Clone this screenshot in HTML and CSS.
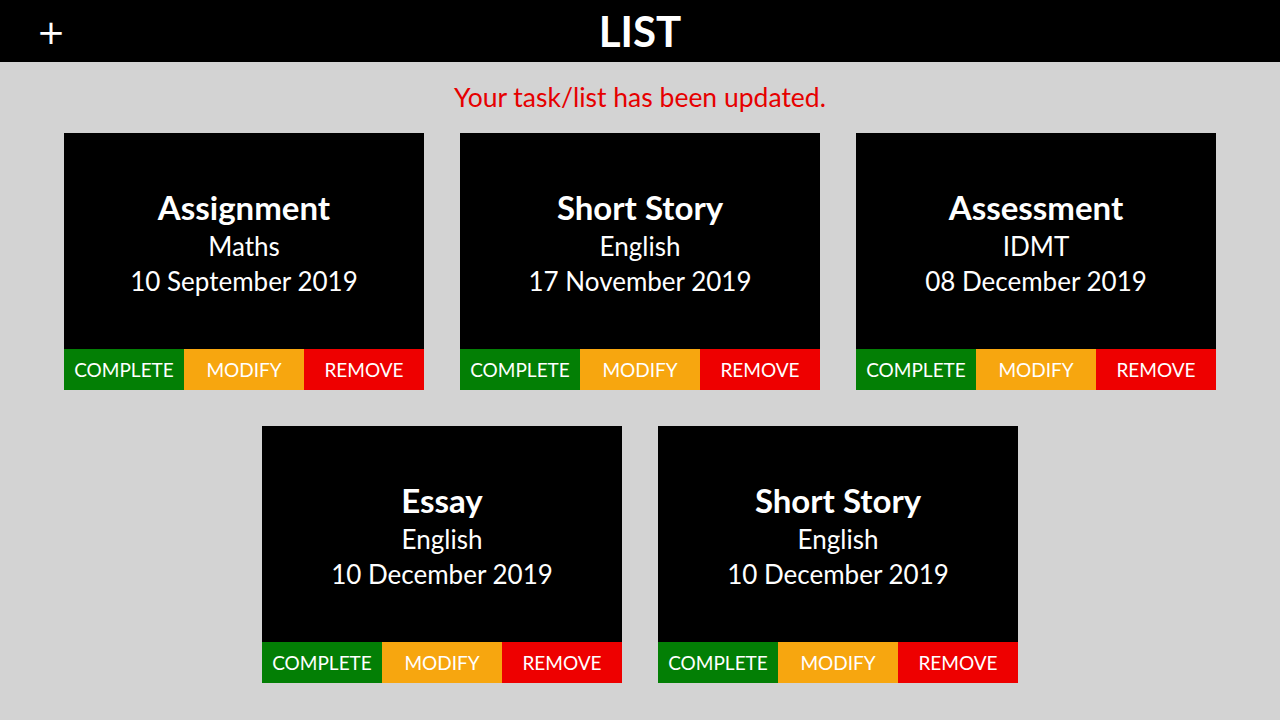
FILE: index.html
```html
<!DOCTYPE html>
<html lang="en">
<head>
<meta charset="utf-8">
<title>LIST</title>
<link rel="stylesheet" href="styles.css">
</head>
<body>
<header class="topbar">
  <button class="add-btn" aria-label="Add">+</button>
  <h1 class="title">LIST</h1>
</header>
<main class="content">
  <p class="message">Your task/list has been updated.</p>
  <section class="cards">
    <article class="card">
      <div class="card-body">
        <h2 class="card-title">Assignment</h2>
        <p class="card-line">Maths</p>
        <p class="card-line">10 September 2019</p>
      </div>
      <div class="card-actions">
        <button class="act complete">COMPLETE</button>
        <button class="act modify">MODIFY</button>
        <button class="act remove">REMOVE</button>
      </div>
    </article>
    <article class="card">
      <div class="card-body">
        <h2 class="card-title">Short Story</h2>
        <p class="card-line">English</p>
        <p class="card-line">17 November 2019</p>
      </div>
      <div class="card-actions">
        <button class="act complete">COMPLETE</button>
        <button class="act modify">MODIFY</button>
        <button class="act remove">REMOVE</button>
      </div>
    </article>
    <article class="card">
      <div class="card-body">
        <h2 class="card-title">Assessment</h2>
        <p class="card-line">IDMT</p>
        <p class="card-line">08 December 2019</p>
      </div>
      <div class="card-actions">
        <button class="act complete">COMPLETE</button>
        <button class="act modify">MODIFY</button>
        <button class="act remove">REMOVE</button>
      </div>
    </article>
    <article class="card">
      <div class="card-body">
        <h2 class="card-title">Essay</h2>
        <p class="card-line">English</p>
        <p class="card-line">10 December 2019</p>
      </div>
      <div class="card-actions">
        <button class="act complete">COMPLETE</button>
        <button class="act modify">MODIFY</button>
        <button class="act remove">REMOVE</button>
      </div>
    </article>
    <article class="card">
      <div class="card-body">
        <h2 class="card-title">Short Story</h2>
        <p class="card-line">English</p>
        <p class="card-line">10 December 2019</p>
      </div>
      <div class="card-actions">
        <button class="act complete">COMPLETE</button>
        <button class="act modify">MODIFY</button>
        <button class="act remove">REMOVE</button>
      </div>
    </article>
  </section>
</main>
</body>
</html>
```
FILE: styles.css
```css
html, body {
  margin: 0;
  padding: 0;
}
body {
  background: #d3d3d3;
  font-family: Lato, "Open Sans", sans-serif;
  color: #fff;
  height: 720px;
  overflow: hidden;
}
.topbar {
  height: 62px;
  background: #000;
  display: flex;
  align-items: center;
  justify-content: center;
  position: relative;
}
.add-btn {
  position: absolute;
  left: 36px;
  top: 12px;
  width: 30px;
  height: 40px;
  padding: 0;
  border: 0;
  background: transparent;
  color: #fff;
  font-family: "DejaVu Sans", sans-serif;
  font-size: 34px;
  line-height: 40px;
}
.title {
  margin: 0;
  font-size: 42px;
  font-weight: 700;
  line-height: 62px;
  letter-spacing: 0;
}
.content {
  display: flex;
  flex-direction: column;
  align-items: center;
}
.message {
  margin: 19px 0 0;
  height: 52px;
  line-height: 32px;
  color: #e60000;
  font-size: 26.5px;
}
.cards {
  display: flex;
  flex-wrap: wrap;
  justify-content: center;
  gap: 36px;
  width: 1152px;
}
.card {
  width: 360px;
  display: flex;
  flex-direction: column;
}
.card-body {
  height: 216px;
  background: #000;
  display: flex;
  flex-direction: column;
  align-items: center;
  justify-content: center;
  padding-top: 2px;
  box-sizing: border-box;
}
.card-title {
  margin: 0;
  font-size: 33px;
  font-weight: 700;
  line-height: 44px;
}
.card-line {
  margin: 0;
  font-size: 26px;
  line-height: 35px;
}
.card-actions {
  display: flex;
  height: 41px;
}
.act {
  flex: 1;
  border: 0;
  padding: 0;
  margin: 0;
  color: #fff;
  font-family: Lato, "Open Sans", sans-serif;
  font-size: 19px;
  line-height: 41px;
}
.complete { background: #037f05; }
.modify { background: #f7a60f; }
.remove { background: #ee0000; }
```
